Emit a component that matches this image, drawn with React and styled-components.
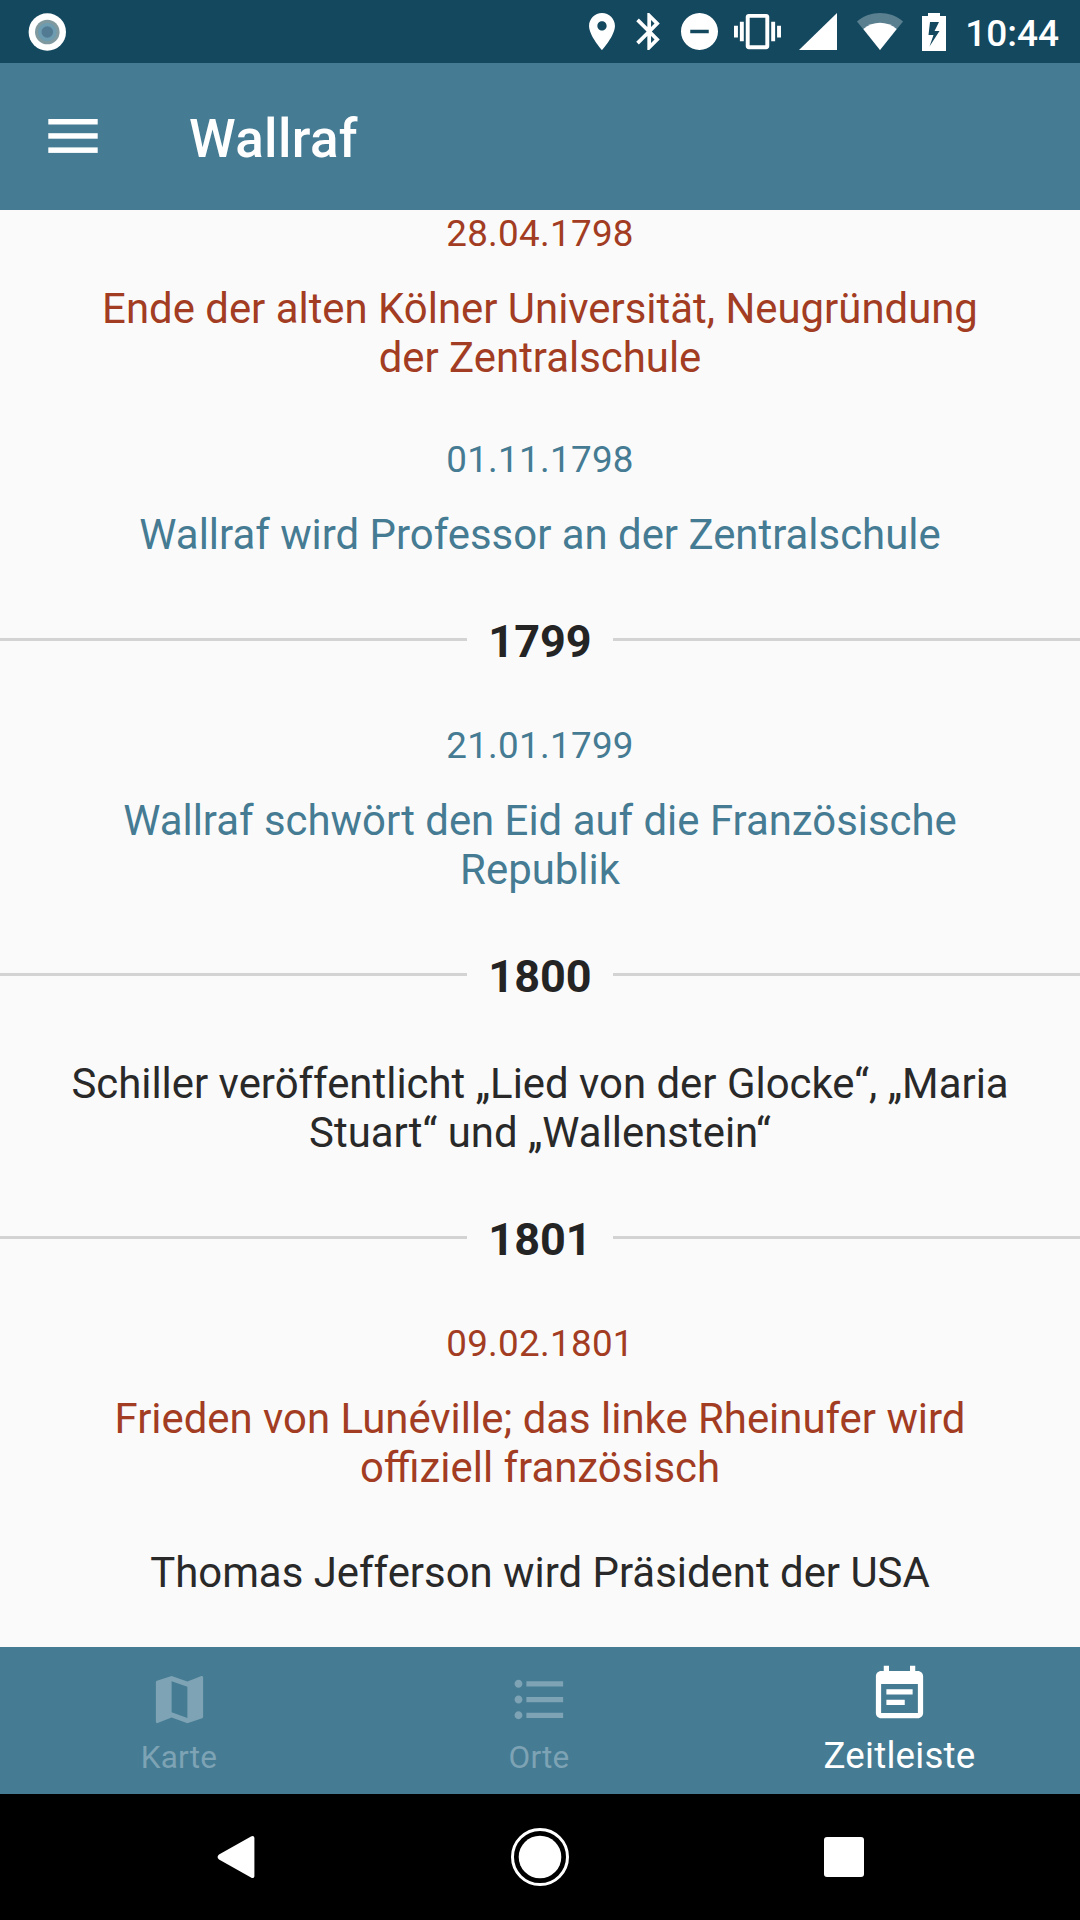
import React from "react";
import styled, { createGlobalStyle } from "styled-components";

const GlobalStyle = createGlobalStyle`
  * {
    box-sizing: border-box;
  }

  body {
    margin: 0;
    background: #000;
    font-family: Roboto, "Noto Sans", sans-serif;
  }
`;

const COLORS = {
  primary: "#457b93",
  primaryDark: "#13485f",
  red: "#a23c22",
  blue: "#457b93",
  text: "#292929",
};

const Screen = styled.div`
  width: 1080px;
  height: 1920px;
  display: flex;
  flex-direction: column;
  overflow: hidden;
`;

const StatusBar = styled.header`
  flex: none;
  height: 63px;
  padding: 0 21px 0 28px;
  display: flex;
  align-items: center;
  background: ${COLORS.primaryDark};
  color: #fff;
`;

const StatusIcon = styled.svg`
  flex: none;
  display: block;
  margin-left: ${({ $gap }) => $gap || 0}px;
  fill: currentColor;
`;

const Spacer = styled.div`
  flex: 1;
`;

const Clock = styled.span`
  margin-left: 19px;
  font-size: 37px;
  font-weight: 500;
  line-height: 43px;
  padding-top: 3px;
`;

const AppBar = styled.div`
  flex: none;
  height: 147px;
  padding-left: 48px;
  display: flex;
  align-items: center;
  background: ${COLORS.primary};
  color: #fff;
`;

const MenuButton = styled.button`
  display: flex;
  padding: 0 0 1px;
  border: 0;
  background: none;
  color: inherit;
`;

const Title = styled.h1`
  margin: 0 0 0 91px;
  padding-top: 4px;
  font-size: 53px;
  font-weight: 500;
  line-height: 62px;
  letter-spacing: 0.35px;
`;

const Content = styled.main`
  flex: 1;
  min-height: 0;
  overflow: hidden;
  background: #fafafa;
`;

// the list is scrolled a bit, its first entry sits right below the app bar
const Timeline = styled.div`
  margin-top: -26px;
`;

const Entry = styled.article`
  padding: 28px 68px;
  text-align: center;
  color: ${({ $color }) => COLORS[$color]};
`;

const EntryDate = styled.div`
  margin-bottom: 29px;
  font-size: 36.75px;
  line-height: 43px;
  letter-spacing: 0.3px;
`;

const EntryTitle = styled.div`
  font-size: 41.9px;
  line-height: 49px;
`;

const YearRow = styled.div`
  display: flex;
  align-items: center;
  padding: 28px 0;
`;

const YearLine = styled.div`
  flex: 1;
  height: 3px;
  margin-bottom: 4px;
  background: #d3d3d3;
`;

const YearLabel = styled.h2`
  width: 146px;
  margin: 0;
  text-align: center;
  font-size: 45px;
  font-weight: 700;
  line-height: 53px;
  color: #242424;
`;

const BottomNav = styled.nav`
  flex: none;
  height: 147px;
  display: grid;
  grid-template-columns: repeat(3, 1fr);
  background: ${COLORS.primary};
`;

const Tab = styled.a`
  display: flex;
  flex-direction: column;
  align-items: center;
  padding-top: ${({ $active }) => ($active ? 16 : 21)}px;
  padding-right: ${({ $active }) => ($active ? 1 : 2)}px;
  color: ${({ $active }) => ($active ? "#fff" : "#7da3b4")};
`;

const TabIcon = styled.svg`
  width: 63px;
  height: 63px;
  fill: currentColor;
`;

const TabLabel = styled.span`
  margin-top: 8px;
  font-size: ${({ $active }) => ($active ? 36.75 : 31.5)}px;
  line-height: ${({ $active }) => ($active ? 43 : 37)}px;
  letter-spacing: 0.2px;
`;

const SystemNav = styled.footer`
  flex: none;
  height: 126px;
  padding: 0 216px;
  display: flex;
  align-items: center;
  justify-content: space-between;
  background: #000;
`;

const timeline = [
  {
    color: "red",
    date: "28.04.1798",
    title: "Ende der alten Kölner Universität, Neugründung der Zentralschule",
  },
  {
    color: "blue",
    date: "01.11.1798",
    title: "Wallraf wird Professor an der Zentralschule",
  },
  { year: "1799" },
  {
    color: "blue",
    date: "21.01.1799",
    title: "Wallraf schwört den Eid auf die Französische Republik",
  },
  { year: "1800" },
  {
    color: "text",
    title: "Schiller veröffentlicht „Lied von der Glocke“, „Maria Stuart“ und „Wallenstein“",
  },
  { year: "1801" },
  {
    color: "red",
    date: "09.02.1801",
    title: "Frieden von Lunéville; das linke Rheinufer wird offiziell französisch",
  },
  { color: "text", title: "Thomas Jefferson wird Präsident der USA" },
];

const tabs = [
  {
    label: "Karte",
    icon: "M20.5 3l-.16.03L15 5.1 9 3 3.36 4.9c-.21.07-.36.25-.36.48V20.5c0 .28.22.5.5.5l.16-.03L9 18.9l6 2.1 5.64-1.9c.21-.07.36-.25.36-.48V3.5c0-.28-.22-.5-.5-.5zM15 19l-6-2.11V5l6 2.11V19z",
  },
  {
    label: "Orte",
    icon: "M4 10.5c-.83 0-1.5.67-1.5 1.5s.67 1.5 1.5 1.5 1.5-.67 1.5-1.5-.67-1.5-1.5-1.5zm0-6c-.83 0-1.5.67-1.5 1.5S3.17 7.5 4 7.5 5.5 6.83 5.5 6 4.83 4.5 4 4.5zm0 12c-.83 0-1.5.68-1.5 1.5s.68 1.5 1.5 1.5 1.5-.68 1.5-1.5-.67-1.5-1.5-1.5zM7 19h14v-2H7v2zm0-6h14v-2H7v2zm0-8v2h14V5H7z",
  },
  {
    label: "Zeitleiste",
    active: true,
    icon: "M17 10H7v2h10v-2zm2-7h-1V1h-2v2H8V1H6v2H5c-1.11 0-1.99.9-1.99 2L3 19c0 1.1.89 2 2 2h14c1.1 0 2-.9 2-2V5c0-1.1-.9-2-2-2zm0 16H5V8h14v11zm-5-5H7v2h7v-2z",
  },
];

const SystemStatus = () => (
  <StatusBar>
    <StatusIcon width="38" height="38" viewBox="0 0 38 38">
      <circle cx="19.3" cy="19" r="18.7" />
      <circle cx="19.3" cy="19" r="12.3" fill="#7f999f" />
      <circle cx="19.3" cy="19" r="9.3" fill="#6d9bb0" />
      <circle cx="19.3" cy="19" r="5.8" fill="#527b93" />
    </StatusIcon>
    <Spacer />
    <StatusIcon width="26" height="37" viewBox="5 2 14 20">
      <path d="M12 2C8.13 2 5 5.13 5 9c0 5.25 7 13 7 13s7-7.75 7-13c0-3.87-3.13-7-7-7zm0 9.5c-1.38 0-2.5-1.12-2.5-2.5s1.12-2.5 2.5-2.5 2.5 1.12 2.5 2.5-1.12 2.5-2.5 2.5z" />
    </StatusIcon>
    <StatusIcon $gap={21} width="24" height="37" viewBox="5 2 12.71 20">
      <path d="M17.71 7.71L12 2h-1v7.59L6.41 5 5 6.41 10.59 12 5 17.59 6.41 19 11 14.41V22h1l5.71-5.71-4.3-4.29 4.3-4.29zM13 5.83l1.88 1.88L13 9.59V5.83zm1.88 10.46L13 18.17v-3.76l1.88 1.88z" />
    </StatusIcon>
    <StatusIcon $gap={21} width="37" height="37" viewBox="2 2 20 20">
      <path d="M12 2C6.48 2 2 6.48 2 12s4.48 10 10 10 10-4.48 10-10S17.52 2 12 2zm5 11H7v-2h10v2z" />
    </StatusIcon>
    <StatusIcon $gap={16} width="47" height="47" viewBox="0 0 24 24">
      <path d="M0 15h2V9H0v6zm3 2h2V7H3v10zm19-8v6h2V9h-2zm-3 8h2V7h-2v10zM16.5 3h-9C6.67 3 6 3.67 6 4.5v15c0 .83.67 1.5 1.5 1.5h9c.83 0 1.5-.67 1.5-1.5v-15c0-.83-.67-1.5-1.5-1.5zM16 19H8V5h8v14z" />
    </StatusIcon>
    <StatusIcon $gap={18} width="38" height="37" viewBox="0 0 38 37">
      <path d="M38 0v37H0z" />
    </StatusIcon>
    <StatusIcon $gap={20} width="46" height="37" viewBox="0 0 46 37">
      <path d="M0 8.5C13-2.8 33-2.8 46 8.5L23 37z" opacity="0.3" />
      <path d="M6.3 16C16 7.7 30 7.7 39.7 16L23 37z" />
    </StatusIcon>
    <StatusIcon $gap={19} width="24" height="38" viewBox="0 0 24 38">
      <path
        fillRule="evenodd"
        d="M6 0h12v3h6v35H0V3h6zM8 9L6.5 22h5L7.5 33.5 17.5 18h-5L17 9z"
      />
    </StatusIcon>
    <Clock>10:44</Clock>
  </StatusBar>
);

const App = () => {
  return (
    <Screen>
      <GlobalStyle />
      <SystemStatus />
      <AppBar>
        <MenuButton aria-label="Menü">
          <svg width="50" height="35" viewBox="0 0 50 35" fill="#fff">
            <rect x="0.3" y="0" width="49.4" height="5.5" />
            <rect x="0.3" y="14.2" width="49.4" height="5.5" />
            <rect x="0.3" y="28.4" width="49.4" height="5.5" />
          </svg>
        </MenuButton>
        <Title>Wallraf</Title>
      </AppBar>
      <Content>
        <Timeline>
          {timeline.map(({ year, color, date, title }) =>
            year ? (
              <YearRow key={year}>
                <YearLine />
                <YearLabel>{year}</YearLabel>
                <YearLine />
              </YearRow>
            ) : (
              <Entry key={title} $color={color}>
                {!!date && <EntryDate>{date}</EntryDate>}
                <EntryTitle>{title}</EntryTitle>
              </Entry>
            )
          )}
        </Timeline>
      </Content>
      <BottomNav>
        {tabs.map(({ label, icon, active }) => (
          <Tab key={label} $active={active}>
            <TabIcon viewBox="0 0 24 24">
              <path d={icon} />
            </TabIcon>
            <TabLabel $active={active}>{label}</TabLabel>
          </Tab>
        ))}
      </BottomNav>
      <SystemNav>
        <svg width="40" height="44" viewBox="0 0 40 44" fill="#fff">
          <path d="M38.4 3v38c0 2-1.8 2.6-3.4 1.5L3 24.5c-1.9-1.4-1.9-3.6 0-5L35 1.5C36.6.4 38.4 1 38.4 3z" />
        </svg>
        <svg width="58" height="58" viewBox="0 0 58 58">
          <circle cx="29" cy="29" r="27.5" fill="none" stroke="#fff" strokeWidth="3" />
          <circle cx="29" cy="29" r="21.3" fill="#fff" />
        </svg>
        <svg width="40" height="40" viewBox="0 0 40 40" fill="#fff">
          <rect width="40" height="40" rx="3" />
        </svg>
      </SystemNav>
    </Screen>
  );
};

export default App;
